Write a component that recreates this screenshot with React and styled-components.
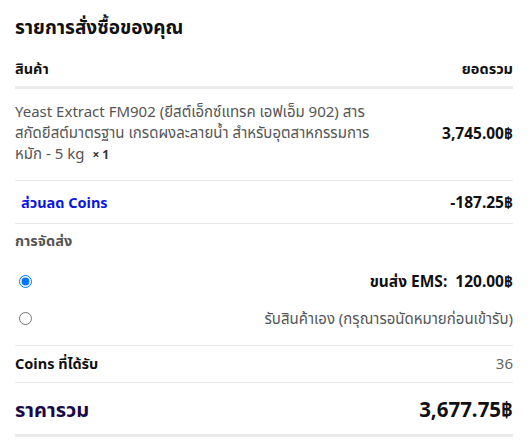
import React from 'react'
import styled, { createGlobalStyle } from 'styled-components'

const GlobalStyle = createGlobalStyle`
  body {
    margin: 0;
    background: #fff;
    font-family: 'Noto Sans', 'Noto Sans Thai', sans-serif;
  }
`

const Wrapper = styled.div`
  padding: 12px 17px 0 15px;
  width: 530px;
  box-sizing: border-box;
`

const Title = styled.h2`
  margin: 0 0 16px;
  font-size: 19px;
  font-weight: 700;
  color: #111;
  line-height: 30px;
`

const Row = styled.div`
  display: flex;
  align-items: center;
  justify-content: space-between;
  line-height: 21px;
  padding: ${(p) => p.pad || '10px 0'};
  border-bottom: ${(p) => (p.thick ? '3px solid #ebebeb' : '1px solid #e8e8e8')};
`

const HeadText = styled.span`
  font-size: 14.5px;
  font-weight: 700;
  color: #111;
`

const ProductName = styled.div`
  font-size: 15px;
  line-height: 21px;
  color: #555;
`

const Qty = styled.strong`
  color: #333;
  font-size: 12px;
  margin-left: 8px;
`

const Amount = styled.span`
  font-size: ${(p) => p.size || 15.5}px;
  font-weight: 700;
  color: #111;
  white-space: nowrap;
`

const Discount = styled.span`
  font-size: 14.5px;
  font-weight: 700;
  color: #0a16e6;
  padding-left: 6px;
`

const SectionLabel = styled.div`
  font-size: 14.5px;
  font-weight: 700;
  line-height: 21px;
  color: #555;
  padding: 6px 0 0;
`

const ShipOption = styled.label`
  display: flex;
  align-items: center;
  justify-content: space-between;
  line-height: 21px;
  padding: ${(p) => p.pad || '0'};
  font-size: ${(p) => (p.bold ? 15.5 : 15)}px;
  color: ${(p) => (p.bold ? '#111' : '#555')};
  font-weight: ${(p) => (p.bold ? 700 : 400)};
  border-bottom: ${(p) => (p.last ? '1px solid #e8e8e8' : 'none')};
`

const Radio = styled.input`
  margin: 0 0 0 4px;
  width: 13px;
  height: 13px;
  accent-color: #0075ff;
`

const Muted = styled.span`
  font-size: 15px;
  color: #666;
`

const TotalLabel = styled.span`
  font-size: 20px;
  font-weight: 700;
  color: #1a0b48;
`

export default function App() {
  return (
    <Wrapper>
      <GlobalStyle />
      <Title>รายการสั่งซื้อของคุณ</Title>
      <Row thick pad="0 0 7px">
        <HeadText>สินค้า</HeadText>
        <HeadText>ยอดรวม</HeadText>
      </Row>
      <Row pad="12px 0 15px">
        <ProductName>
          Yeast Extract FM902 (ยีสต์เอ็กซ์แทรค เอฟเอ็ม 902) สาร
          <br />
          สกัดยีสต์มาตรฐาน เกรดผงละลายน้ำ สำหรับอุตสาหกรรมการ
          <br />
          หมัก - 5 kg
          <Qty>× 1</Qty>
        </ProductName>
        <Amount>3,745.00฿</Amount>
      </Row>
      <Row pad="11px 0 10px">
        <Discount>ส่วนลด Coins</Discount>
        <Amount>-187.25฿</Amount>
      </Row>
      <SectionLabel>การจัดส่ง</SectionLabel>
      <ShipOption bold pad="20px 0 0">
        <Radio type="radio" name="ship" defaultChecked />
        <span>ขนส่ง EMS: &nbsp;120.00฿</span>
      </ShipOption>
      <ShipOption last pad="16px 0 16px">
        <Radio type="radio" name="ship" />
        <span>รับสินค้าเอง (กรุณารอนัดหมายก่อนเข้ารับ)</span>
      </ShipOption>
      <Row pad="7px 0 8px">
        <HeadText>Coins ที่ได้รับ</HeadText>
        <Muted>36</Muted>
      </Row>
      <Row thick pad="16px 0 14px">
        <TotalLabel>ราคารวม</TotalLabel>
        <Amount size={20.5}>3,677.75฿</Amount>
      </Row>
    </Wrapper>
  )
}
